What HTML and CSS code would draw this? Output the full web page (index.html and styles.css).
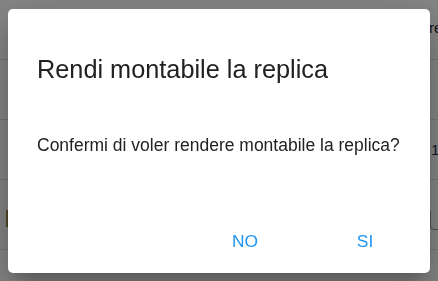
FILE: index.html
```html
<!DOCTYPE html>
<html lang="it">
<head>
<meta charset="utf-8">
<title>Rendi montabile la replica</title>
<link rel="stylesheet" href="styles.css">
</head>
<body>
<div class="page">
  <div class="row row-head">
    <span class="lead"></span>
    <span class="cell cell-head">re</span>
  </div>
  <div class="row"><span class="lead"></span><span class="cell"></span></div>
  <div class="row"><span class="lead"></span><span class="cell cell-num">1</span></div>
  <div class="row row-tall">
    <span class="lead"><span class="mark"></span></span>
    <span class="cell"><span class="outlined"></span></span>
  </div>
  <div class="row row-foot"></div>
</div>

<div class="backdrop"></div>

<div class="dialog" role="dialog" aria-labelledby="dlg-title">
  <h2 class="dialog-title" id="dlg-title">Rendi montabile la replica</h2>
  <p class="dialog-text">Confermi di voler rendere montabile la replica?</p>
  <div class="dialog-actions">
    <button class="btn">NO</button>
    <button class="btn">SI</button>
  </div>
</div>
</body>
</html>
```

FILE: styles.css
```css
html, body {
  margin: 0;
  padding: 0;
  overflow: hidden;
  background: #ffffff;
  font-family: "Liberation Sans", Arial, sans-serif;
}

.page {
  display: flex;
  flex-direction: column;
  width: 438px;
  height: 281px;
}

.row {
  display: flex;
  align-items: center;
  height: 59px;
  border-bottom: 1px solid #e0e0e0;
  flex-shrink: 0;
}

.row-tall {
  height: 69px;
}

.row-foot {
  flex: 1;
  border-bottom: none;
}

.lead {
  width: 428px;
  flex-shrink: 0;
  display: flex;
  align-items: center;
}

.cell {
  white-space: nowrap;
  font-size: 16px;
  color: #1a1a1a;
}

.cell-head {
  padding-left: 1px;
  position: relative;
  top: -2px;
  font-size: 15px;
  color: #2a2a30;
}

.cell-num {
  padding-left: 3px;
  font-size: 15px;
  color: #1d2a44;
}

.mark {
  display: block;
  width: 2px;
  height: 17px;
  margin-left: 6px;
  margin-top: 8px;
  background: #a08a50;
}

.outlined {
  display: block;
  margin-left: 2px;
  margin-top: 12px;
  width: 10px;
  height: 18px;
  border-left: 1px solid #9e9e9e;
  border-bottom: 1px solid #9e9e9e;
  border-bottom-left-radius: 4px;
}

.backdrop {
  position: fixed;
  inset: 0;
  background: rgba(0, 0, 0, 0.48);
}

.dialog {
  position: fixed;
  left: 8px;
  top: 9px;
  width: 422px;
  height: 264px;
  box-sizing: border-box;
  background: #ffffff;
  border-radius: 5px;
  padding: 45px 0 0 29px;
  display: flex;
  flex-direction: column;
  box-shadow: 0 11px 15px -7px rgba(0,0,0,0.2),
              0 24px 38px 3px rgba(0,0,0,0.14),
              0 9px 46px 8px rgba(0,0,0,0.12);
}

.dialog-title {
  margin: 0;
  font-weight: 400;
  font-size: 25.3px;
  line-height: 30px;
  color: #212121;
}

.dialog-text {
  margin: 49px 0 0;
  font-size: 17.5px;
  line-height: 24px;
  color: #222222;
}

.dialog-actions {
  margin-top: 66px;
  display: flex;
  justify-content: flex-end;
  gap: 20px;
  padding-right: 15px;
}

.btn {
  width: 100px;
  padding: 6px 0;
  border: none;
  background: transparent;
  font-family: "Liberation Sans", Arial, sans-serif;
  font-size: 17.4px;
  line-height: 24px;
  color: #2196f3;
  cursor: pointer;
}
```
